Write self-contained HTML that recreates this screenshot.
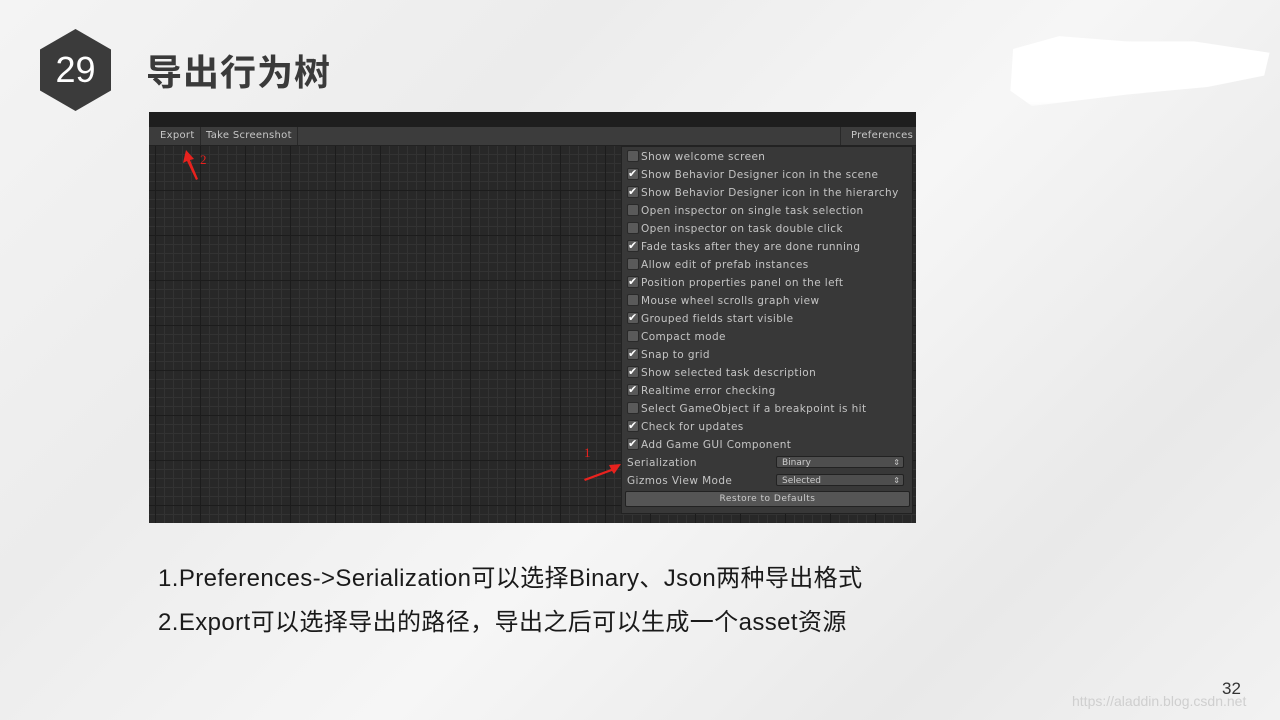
<!DOCTYPE html>
<html><head><meta charset="utf-8"><style>
body{margin:0;width:1280px;height:720px;overflow:hidden;position:relative;font-family:"Liberation Sans","Noto Sans CJK SC",sans-serif;
background:linear-gradient(135deg,#f4f4f4 0%,#ececec 30%,#f6f6f6 55%,#e9e9e9 80%,#f2f2f2 100%);}
.hex{position:absolute;left:40px;top:29px;width:71px;height:82px;background:#3b3b3b;clip-path:polygon(50% 0,100% 25%,100% 75%,50% 100%,0 75%,0 25%);color:#fff;font-size:36px;line-height:82px;text-align:center}
.title{position:absolute;left:146px;top:44px;font-size:36px;font-weight:bold;color:#3a3a3a;letter-spacing:1px}
.win{position:absolute;left:149px;top:112px;width:767px;height:411px;background:#282828;overflow:hidden}
.top{position:absolute;left:0;top:0;width:767px;height:15px;background:#1e1e1e}
.tb{position:absolute;left:0;top:15px;width:767px;height:18px;background:#3c3c3c;border-bottom:1px solid #222}
.tb span{position:absolute;top:0;height:18px;line-height:18px;font-size:10px;color:#c8c8c8;letter-spacing:.3px;font-family:"DejaVu Sans",sans-serif;border-right:1px solid #282828;white-space:nowrap}
.grid{position:absolute;left:0;top:34px;width:767px;height:377px;
background-image:linear-gradient(#1c1c1c 1px,transparent 1px),linear-gradient(90deg,#1c1c1c 1px,transparent 1px),linear-gradient(#333 1px,transparent 1px),linear-gradient(90deg,#333 1px,transparent 1px);
background-size:45px 45px,45px 45px,9px 9px,9px 9px;background-position:0 -1px,6px 0,0 -1px,6px 0}
.panel{position:absolute;left:472px;top:34px;width:290px;height:366px;background:#383838;border:1px solid #222}
.row{position:absolute;left:5px;height:18px;line-height:18px;font-size:10.5px;color:#c4c4c4;font-family:"DejaVu Sans",sans-serif;letter-spacing:.4px;white-space:nowrap}
.cb{display:inline-block;width:10px;height:10px;background:#5a5a5a;border:1px solid #2a2a2a;border-radius:2px;vertical-align:-2px;margin-right:2px;position:relative}
.cb.c:after{content:"✔";position:absolute;left:0;top:-4px;font-size:11px;color:#fff}
.sel{position:absolute;left:154px;width:128px;height:12px;background:#4e4e4e;border:1px solid #222;border-radius:2px;font-size:9px;line-height:12px;color:#ccc;padding-left:5px;box-sizing:border-box;font-family:"DejaVu Sans",sans-serif}
.sel:after{content:"⇕";position:absolute;right:3px;top:0;font-size:8px}
.btn{position:absolute;left:3px;top:344px;width:283px;height:14px;background:#555;border:1px solid #222;border-radius:2px;text-align:center;font-size:9px;line-height:14px;color:#ccc;font-family:"DejaVu Sans",sans-serif;letter-spacing:.5px}
.txt{position:absolute;left:158px;font-size:24px;color:#1a1a1a;white-space:nowrap;letter-spacing:.4px}
</style></head><body>
<div class="hex">29</div>
<div class="title">导出行为树</div>
<div style="position:absolute;left:1005px;top:30px;width:270px;height:76px;background:#fff;filter:blur(3px);clip-path:polygon(3% 25%,20% 8%,45% 15%,70% 15%,98% 30%,96% 60%,75% 75%,45% 85%,10% 100%,2% 80%)"></div>
<div class="win">
<div class="top"></div>
<div class="tb"><span style="left:5px;padding:0 6px;width:34px">Export</span><span style="left:52px;padding:0 5px;width:86px">Take Screenshot</span><span style="left:691px;border:none;border-left:1px solid #282828;padding-left:10px">Preferences</span></div>
<div class="grid"></div>
<svg style="position:absolute;left:0;top:0" width="767" height="411">
<path d="M37 38 L34 51 L38 49 L47 68 L49 67 L41 48 L45 47Z" fill="#e8221e"/>
<text x="51" y="52" fill="#e8221e" font-size="13" font-family="Liberation Serif">2</text>
<text x="435" y="345" fill="#e8221e" font-size="13" font-family="Liberation Serif">1</text>
<path d="M435 367 L462 357 L460 353 L472 352 L465 362 L463 359 L436 369Z" fill="#e8221e"/>
</svg>
<div class="panel">
<div class="row" style="top:1px"><i class="cb"></i>Show welcome screen</div>
<div class="row" style="top:19px"><i class="cb c"></i>Show Behavior Designer icon in the scene</div>
<div class="row" style="top:37px"><i class="cb c"></i>Show Behavior Designer icon in the hierarchy</div>
<div class="row" style="top:55px"><i class="cb"></i>Open inspector on single task selection</div>
<div class="row" style="top:73px"><i class="cb"></i>Open inspector on task double click</div>
<div class="row" style="top:91px"><i class="cb c"></i>Fade tasks after they are done running</div>
<div class="row" style="top:109px"><i class="cb"></i>Allow edit of prefab instances</div>
<div class="row" style="top:127px"><i class="cb c"></i>Position properties panel on the left</div>
<div class="row" style="top:145px"><i class="cb"></i>Mouse wheel scrolls graph view</div>
<div class="row" style="top:163px"><i class="cb c"></i>Grouped fields start visible</div>
<div class="row" style="top:181px"><i class="cb"></i>Compact mode</div>
<div class="row" style="top:199px"><i class="cb c"></i>Snap to grid</div>
<div class="row" style="top:217px"><i class="cb c"></i>Show selected task description</div>
<div class="row" style="top:235px"><i class="cb c"></i>Realtime error checking</div>
<div class="row" style="top:253px"><i class="cb"></i>Select GameObject if a breakpoint is hit</div>
<div class="row" style="top:271px"><i class="cb c"></i>Check for updates</div>
<div class="row" style="top:289px"><i class="cb c"></i>Add Game GUI Component</div>
<div class="row" style="top:307px">Serialization</div>
<div class="row" style="top:325px">Gizmos View Mode</div>
<div class="sel" style="top:309px">Binary</div>
<div class="sel" style="top:327px">Selected</div>
<div class="btn">Restore to Defaults</div>
</div>
</div>
<div class="txt" style="top:558px">1.Preferences-&gt;Serialization可以选择Binary、Json两种导出格式</div>
<div class="txt" style="top:602px">2.Export可以选择导出的路径，导出之后可以生成一个asset资源</div>
<div style="position:absolute;left:1222px;top:679px;font-size:17px;color:#333">32</div>
<div style="position:absolute;left:1072px;top:693px;font-size:14px;color:#cfcfcf">https://aladdin.blog.csdn.net</div>
</body></html>
